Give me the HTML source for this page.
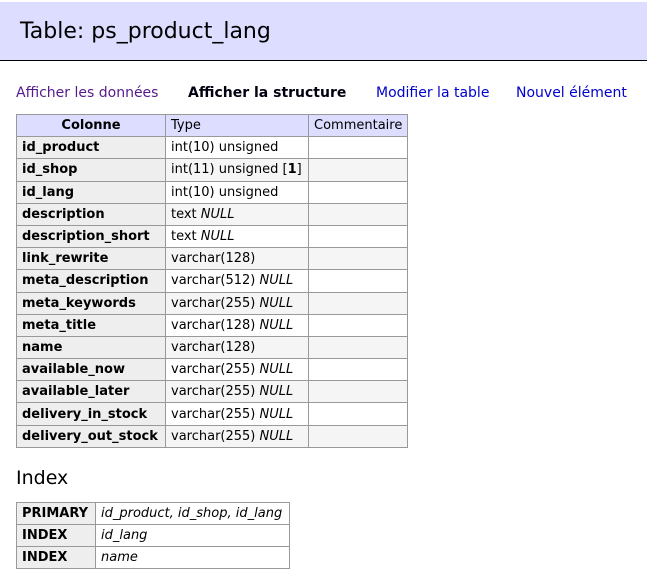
<!DOCTYPE html>
<html><head><meta charset="utf-8"><style>
body{margin:0;font-family:Verdana,"DejaVu Sans",sans-serif;font-size:13px;color:#000;background:#fff;width:647px;height:579px;overflow:hidden;position:relative}
#h{position:absolute;left:0;top:2px;width:647px;height:58px;background:#ddf;border-bottom:1px solid #000}
#h h2{margin:0;position:absolute;left:20px;top:17px;font-size:22px;font-weight:normal;line-height:26px}
#nav{position:absolute;top:84px;left:16px;line-height:18px;white-space:nowrap;font-size:14px}
#nav a{text-decoration:none;position:absolute;top:0}
table{border-collapse:collapse;position:absolute;left:16px;font-size:13px}
td,th{border:1px solid #999;padding:0 5px 0 5px;height:21.2px;line-height:15px;text-align:left;white-space:nowrap}
thead th{background:#ddf;font-weight:bold}
tbody th{background:#eee}
tr.o td{background:#f5f5f5}
thead td{background:#ddf}
i{font-style:italic}
#t1{top:114px}
#ih{position:absolute;left:16px;top:467px;font-size:19px;font-weight:normal;margin:0}
#t2{top:502px}
#t2 td,#t2 th{height:21px}
</style></head><body>
<div id="h"><h2>Table: ps_product_lang</h2></div>
<div id="nav">
<a style="left:0;color:#551a8b">Afficher les données</a>
<a style="left:172px;color:#001;font-weight:bold">Afficher la structure</a>
<a style="left:360px;color:#00c">Modifier la table</a>
<a style="left:500px;color:#00c">Nouvel élément</a>
</div>
<table id="t1">
<thead><tr><th style="text-align:center;width:138px">Colonne</th><td style="width:132px">Type</td><td style="width:80px">Commentaire</td></tr></thead>
<tbody>
<tr><th>id_product</th><td>int(10) unsigned</td><td></td></tr>
<tr class="o"><th>id_shop</th><td>int(11) unsigned [<b>1</b>]</td><td></td></tr>
<tr><th>id_lang</th><td>int(10) unsigned</td><td></td></tr>
<tr class="o"><th>description</th><td>text <i>NULL</i></td><td></td></tr>
<tr><th>description_short</th><td>text <i>NULL</i></td><td></td></tr>
<tr class="o"><th>link_rewrite</th><td>varchar(128)</td><td></td></tr>
<tr><th>meta_description</th><td>varchar(512) <i>NULL</i></td><td></td></tr>
<tr class="o"><th>meta_keywords</th><td>varchar(255) <i>NULL</i></td><td></td></tr>
<tr><th>meta_title</th><td>varchar(128) <i>NULL</i></td><td></td></tr>
<tr class="o"><th>name</th><td>varchar(128)</td><td></td></tr>
<tr><th>available_now</th><td>varchar(255) <i>NULL</i></td><td></td></tr>
<tr class="o"><th>available_later</th><td>varchar(255) <i>NULL</i></td><td></td></tr>
<tr><th>delivery_in_stock</th><td>varchar(255) <i>NULL</i></td><td></td></tr>
<tr class="o"><th>delivery_out_stock</th><td>varchar(255) <i>NULL</i></td><td></td></tr>
</tbody></table>
<h3 id="ih">Index</h3>
<table id="t2"><tbody>
<tr><th style="width:68px">PRIMARY</th><td style="width:183px"><i>id_product, id_shop, id_lang</i></td></tr>
<tr><th>INDEX</th><td><i>id_lang</i></td></tr>
<tr><th>INDEX</th><td><i>name</i></td></tr>
</tbody></table>
</body></html>
